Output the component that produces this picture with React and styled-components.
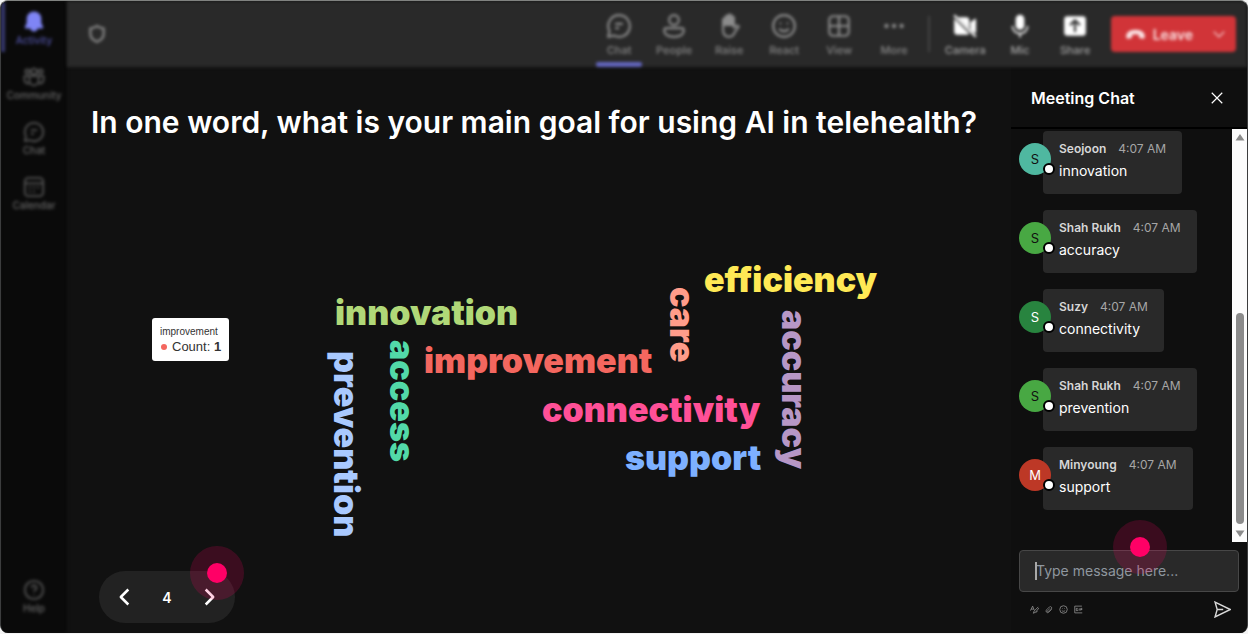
import React from 'react';
import styled, { createGlobalStyle } from 'styled-components';

const GlobalStyle = createGlobalStyle`
  * {
    box-sizing: border-box;
  }

  body {
    margin: 0;
    background: #f4f4f4;
    color: #fff;
    font-family: Inter, 'Liberation Sans', sans-serif;
  }

  button {
    padding: 0;
    border: 0;
    background: none;
    color: inherit;
    font-family: inherit;
    cursor: pointer;
  }

  svg {
    display: block;
    flex: none;
  }
`;

const Page = styled.div`
  height: 100vh;
  min-height: 600px;
  padding-bottom: 1px;
`;

const Frame = styled.div`
  display: grid;
  grid-template-columns: 66px 1fr;
  height: 100%;
  border: 1px solid #3c3d3e;
  border-top-color: #808280;
  border-bottom: 0;
  border-radius: 8px;
  background: #111;
  overflow: hidden;
`;

const Sidebar = styled.nav`
  display: flex;
  flex-direction: column;
  gap: 5px;
  padding: 1px 0 12px;
  background: #0a0a0a;
  filter: blur(1px) blur(1px);
`;

const NavItem = styled.button`
  display: flex;
  flex-direction: column;
  align-items: center;
  height: ${p => (p.$last ? '42px' : '50px')};
  margin-top: ${p => (p.$last ? 'auto' : '0')};
  padding-top: ${p => (p.$last ? '0' : '9px')};
  border-left: 4px solid ${p => (p.$active ? '#37396f' : 'transparent')};
  border-right: 4px solid transparent;
  color: ${p => (p.$active ? '#7f85f5' : '#545454')};
  font-size: 10px;
  line-height: 14px;

  span {
    color: ${p => (p.$active ? '#5052a4' : '#686868')};
    font-weight: 500;
  }
`;

const Main = styled.div`
  display: flex;
  flex-direction: column;
  min-width: 0;
  min-height: 0;
`;

const Toolbar = styled.header`
  display: flex;
  align-items: center;
  flex: none;
  height: 66px;
  padding: 0 11px 0 20px;
  background: #292929;
  color: #808080;
  filter: blur(1px) blur(1px);
`;

const Tools = styled.div`
  display: flex;
  align-items: center;
  height: 100%;
  margin-left: auto;
`;

const Tool = styled.button`
  display: flex;
  flex-direction: column;
  align-items: center;
  gap: 3px;
  width: 55px;
  height: 100%;
  padding-top: 12px;
  color: ${p => (p.$bright ? '#fff' : '#8c8c8c')};
  font-size: 11px;
  line-height: 16px;

  span {
    color: ${p => (p.$bright ? '#a2a2a2' : '#868686')};
    font-weight: 500;
  }

  &::after {
    content: '';
    width: 46px;
    height: 5px;
    margin-top: 1px;
    border-radius: 2px;
    background: ${p => (p.$active ? '#6366bd' : 'transparent')};
  }
`;

const Divider = styled.div`
  width: 2px;
  height: 36px;
  margin: 0 8px 0 6px;
  background: #444;
`;

const LeaveGroup = styled.div`
  display: flex;
  height: 36px;
  margin-left: 8px;
  border-radius: 4px;
  background: #d13438;
  color: #fbe3e4;
`;

const LeaveButton = styled.button`
  display: flex;
  align-items: center;
  gap: 7px;
  padding: 0 15px 0 14px;
  font-size: 14px;
  font-weight: 600;
`;

const LeaveMenu = styled.button`
  display: flex;
  align-items: center;
  padding: 0 10px 0 4px;
`;

const Content = styled.div`
  display: flex;
  flex: 1;
  min-height: 0;
`;

const Slide = styled.main`
  display: flex;
  flex-direction: column;
  flex: 1;
  min-width: 0;
  padding: 36px 24px 10px;
`;

const Question = styled.h1`
  margin: 0;
  font-size: 30px;
  font-weight: 600;
  line-height: 38px;
`;

const Cloud = styled.div`
  position: relative;
  flex: 1;
`;

/* Every word sits at its own spot on the cloud's canvas. */
const Word = styled.span`
  position: absolute;
  left: ${p => p.$x}px;
  top: ${p => p.$y}px;
  color: ${p => p.$color};
  font-size: 34px;
  font-weight: 900;
  line-height: 40px;
  white-space: nowrap;
  writing-mode: ${p => (p.$vertical ? 'vertical-rl' : 'horizontal-tb')};
`;

const Tooltip = styled.div`
  position: absolute;
  left: 61px;
  top: 177px;
  padding: 7px 8px;
  border-radius: 3px;
  background: #fff;
  color: #333;
  font-family: 'Liberation Sans', Arial, sans-serif;
  font-size: 13px;
  line-height: 15px;
  white-space: nowrap;
`;

const TooltipTitle = styled.div`
  font-size: 10px;
  line-height: 14px;
`;

const SeriesDot = styled.i`
  display: inline-block;
  width: 6px;
  height: 6px;
  margin: 0 5px 1px 1px;
  border-radius: 50%;
  background: #f4675f;
`;

const Pager = styled.div`
  position: relative;
  display: grid;
  grid-template-columns: repeat(3, 42px);
  align-self: flex-start;
  align-items: center;
  justify-items: center;
  height: 52px;
  margin-left: 8px;
  padding: 0 5px;
  border-radius: 26px;
  background: #222;
  font-size: 14px;
  font-weight: 600;
`;

const Hotspot = styled.div`
  position: absolute;
  right: ${p => p.$right}px;
  top: ${p => p.$top}px;
  display: grid;
  place-items: center;
  width: 54px;
  height: 54px;
  border-radius: 50%;
  background: rgba(255, 0, 102, 0.18);
  pointer-events: none;

  &::after {
    content: '';
    width: 20px;
    height: 20px;
    border-radius: 50%;
    background: #ff0066;
  }
`;

const ChatPanel = styled.aside`
  display: flex;
  flex-direction: column;
  flex: none;
  width: 236px;
  padding-top: 2px;
  background: #0f0f0f;
`;

const ChatHeader = styled.div`
  display: flex;
  align-items: center;
  justify-content: space-between;
  flex: none;
  height: 60px;
  padding: 0 23px 0 20px;
  border-bottom: 2px solid #000;
`;

const ChatTitle = styled.h2`
  margin: 0;
  font-size: 16px;
  font-weight: 600;
`;

const ChatBody = styled.div`
  display: flex;
  flex: 1;
  min-height: 0;
`;

const Messages = styled.ul`
  display: flex;
  flex-direction: column;
  flex: 1;
  gap: 16px;
  margin: 0;
  padding: 2px 8px 0;
  list-style: none;
  overflow: hidden;
`;

const MessageRow = styled.li`
  display: flex;
  align-items: flex-start;
`;

const Avatar = styled.div`
  position: relative;
  display: grid;
  place-items: center;
  flex: none;
  width: 32px;
  height: 32px;
  margin: 12px -8px 0 0;
  border-radius: 50%;
  background: ${p => p.$color};
  color: ${p => p.$ink};
  font-size: 13px;
`;

/* Sits on the avatar's lower right edge, over the bubble. */
const Presence = styled.i`
  position: absolute;
  left: 24px;
  top: 20px;
  width: 12px;
  height: 12px;
  border: 2px solid #000;
  border-radius: 50%;
  background: #fff;
`;

const Bubble = styled.div`
  height: 63px;
  padding: 9px 16px;
  border-radius: 4px;
  background: #292929;
`;

const MessageMeta = styled.div`
  display: flex;
  gap: 12px;
  color: #a6a6a6;
  font-size: 12px;
  line-height: 18px;

  strong {
    color: #d6d6d6;
    font-weight: 600;
  }
`;

const MessageText = styled.p`
  margin: 3px 0 0;
  font-size: 14px;
  line-height: 20px;
`;

const Scrollbar = styled.div`
  display: flex;
  flex-direction: column;
  align-items: center;
  flex: none;
  width: 15px;
  padding: 4px 0;
  background: #fcfcfc;
  color: #8b8b8b;
`;

const Track = styled.div`
  display: flex;
  flex: 1;
  align-items: flex-end;
  padding: 6px 0;
`;

const Thumb = styled.div`
  width: 8px;
  height: 56%;
  border-radius: 4px;
  background: #8b8b8b;
`;

const Composer = styled.form`
  position: relative;
  flex: none;
  padding: 8px 8px 15px;
`;

const MessageInput = styled.input`
  display: block;
  width: 100%;
  height: 42px;
  padding: 0 16px 2px;
  border: 1px solid #474747;
  border-radius: 4px;
  outline: none;
  background: #292929;
  color: #fff;
  font-family: inherit;
  font-size: 14px;

  &::placeholder {
    color: #8f979f;
    opacity: 1;
  }
`;

const Caret = styled.i`
  position: absolute;
  left: 24px;
  top: 20px;
  width: 2px;
  height: 18px;
  background: #a8a8a8;
`;

const ComposerTools = styled.div`
  display: flex;
  align-items: center;
  gap: 6px;
  margin-top: 9px;
  padding: 0 8px 0 11px;
  color: #999;

  button:last-child {
    margin-left: auto;
    color: #d6d6d6;
  }
`;

const ICONS = {
  bell: (
    <path
      fill="currentColor"
      stroke="none"
      d="M12 .5a8 8 0 0 0-8 8v4.7L2 17.5c-.3.8.2 1.5 1 1.5h4.9a4.2 4.2 0 0 0 8.2 0H21c.8 0 1.3-.7 1-1.5l-2-4.3V8.5a8 8 0 0 0-8-8z"
    />
  ),
  community: (
    <>
      <circle cx="12" cy="6" r="3.2" />
      <circle cx="4.8" cy="6" r="2.3" />
      <circle cx="19.2" cy="6" r="2.3" />
      <path d="M7 11h10v5a5 5 0 0 1-10 0zM7 11H1.5v4a4 4 0 0 0 5.8 3.6M17 11h5.5v4a4 4 0 0 1-5.8 3.6" />
    </>
  ),
  chat: <path d="M12 2a10 10 0 1 1-4.7 18.8L2 22l1.2-5.3A10 10 0 0 1 12 2zM8.5 10h7M8.5 14H12" />,
  calendar: (
    <>
      <rect x="2" y="2" width="20" height="20" rx="4" />
      <path d="M2 8h20M6.5 12.5h2M11 12.5h2M15.5 12.5h2M6.5 17h2M11 17h2" />
    </>
  ),
  help: (
    <>
      <circle cx="12" cy="12" r="10" />
      <path d="M9.5 9.5a2.6 2.6 0 1 1 3.8 2.3c-1 .6-1.3 1-1.3 2M12 17v1" />
    </>
  ),
  shield: <path d="M12 2.5c2.4 1.8 5 2.6 8 2.8v6.2c0 4.8-2.8 8-8 10-5.2-2-8-5.2-8-10V5.3c3-.2 5.6-1 8-2.8z" />,
  people: (
    <>
      <circle cx="12" cy="6.5" r="4.5" />
      <path d="M5 14h14a2 2 0 0 1 2 2c0 4-4 6-9 6s-9-2-9-6a2 2 0 0 1 2-2z" />
    </>
  ),
  hand: (
    <>
      <path
        fill="currentColor"
        d="M6.5 11V6.3a1.2 1.2 0 0 1 2.4 0V4a1.3 1.3 0 0 1 2.6 0V2.8a1.3 1.3 0 0 1 2.6 0V4.5a1.2 1.2 0 0 1 2.4 0V11z"
      />
      <path d="M6.5 10v5.5c0 4 2 6.5 5.5 6.5 3 0 4.5-1.8 5.5-4.5l3.5-5c-1.3-1.4-3-1-4.5 1V9" />
    </>
  ),
  smile: (
    <>
      <circle cx="12" cy="12" r="10" />
      <path d="M8 9.5h1.5M14.5 9.5H16M7.5 14.5c2.4 3 6.6 3 9 0" />
    </>
  ),
  grid: (
    <>
      <rect x="3" y="3" width="18" height="18" rx="3.5" />
      <path d="M12 3v18M3 12h18" />
    </>
  ),
  more: <path strokeWidth="4" strokeLinecap="round" d="M5 12h.1M12 12h.1M19 12h.1" />,
  camera: (
    <>
      <path
        fill="currentColor"
        stroke="none"
        d="M5.5 4H13a3 3 0 0 1 3 3v7.5zM2 5l14 14.2c-.6.5-1.5.8-2.5.8H5a3 3 0 0 1-3-3zM17 8.5l4-3c.6-.4 1.2 0 1.2.6v11.8c0 .7-.6 1-1.2.6l-4-3z"
      />
      <path d="M2 2l20 20" />
    </>
  ),
  mic: (
    <>
      <rect x="8" y="1.5" width="8" height="14" rx="4" fill="currentColor" stroke="none" />
      <path strokeWidth="1.5" d="M5 12a7 7 0 0 0 14 0M12 19v3.5" />
    </>
  ),
  share: (
    <>
      <rect x="2" y="3" width="20" height="18" rx="3" fill="currentColor" stroke="none" />
      <path stroke="#333" d="M12 17.5V7M7.5 11.2L12 6.8l4.5 4.4" />
    </>
  ),
  phone: (
    <path
      fill="currentColor"
      stroke="none"
      d="M12 6.5c5 0 8.5 1.8 10 4.5.8 1.5.8 3.5.3 5-.2.7-.9 1-1.6.9l-3.5-.7c-.7-.2-1.1-.7-1.2-1.4l-.3-2.6c-2.4-.8-5-.8-7.4 0L8 14.8c-.1.7-.5 1.2-1.2 1.4l-3.5.7c-.7.1-1.4-.2-1.6-.9-.5-1.5-.5-3.5.3-5 1.5-2.7 5-4.5 10-4.5z"
    />
  ),
  down: <path d="M3 8l9 9 9-9" />,
  left: <path d="M16 3l-9 9 9 9" />,
  right: <path d="M8 3l9 9-9 9" />,
  close: <path d="M3 3l18 18M21 3L3 21" />,
  format: <path d="M1 15L7 3l4 10M3 11h7M22 5L11 16l-2 6 6-3L24 8M15 20c2-2 3-1 5-3" />,
  clip: <path d="M20 10l-9 9a5 5 0 0 1-7-7l9-9a4 4 0 0 1 6 6l-9 9a2 2 0 0 1-3-3l8-8" />,
  gif: (
    <>
      <path d="M21 3H2v18h20" />
      <path d="M10 9H6v6h4v-3M14 9v6M22 9h-4v6M18 12h4" />
    </>
  ),
  send: <path strokeLinejoin="miter" d="M1.5 1.5L23 12 1.5 22.5 4.5 12zM4.5 12H13" />
};

const Icon = ({ name, size = 20, stroke = 2 }) => (
  <svg
    width={size}
    height={size}
    viewBox="0 0 24 24"
    fill="none"
    stroke="currentColor"
    strokeWidth={stroke}
    strokeLinejoin="round"
    aria-hidden="true"
  >
    {ICONS[name]}
  </svg>
);

const navItems = [
  { icon: 'bell', label: 'Activity', active: true },
  { icon: 'community', label: 'Community' },
  { icon: 'chat', label: 'Chat' },
  { icon: 'calendar', label: 'Calendar' }
];

const meetingTools = [
  { icon: 'chat', label: 'Chat', active: true },
  { icon: 'people', label: 'People' },
  { icon: 'hand', label: 'Raise' },
  { icon: 'smile', label: 'React' },
  { icon: 'grid', label: 'View' },
  { icon: 'more', label: 'More' }
];

const deviceTools = [
  { icon: 'camera', label: 'Camera' },
  { icon: 'mic', label: 'Mic' },
  { icon: 'share', label: 'Share' }
];

const words = [
  { text: 'innovation', x: 244, y: 152, color: '#b0d878' },
  { text: 'efficiency', x: 613, y: 119, color: '#ffe955' },
  { text: 'improvement', x: 333, y: 200, color: '#f4675f' },
  { text: 'connectivity', x: 451, y: 249, color: '#ff5097' },
  { text: 'support', x: 534, y: 297, color: '#7db0ff' },
  { text: 'prevention', x: 235, y: 210, color: '#a9c9ff', vertical: true },
  { text: 'access', x: 291, y: 199, color: '#52d9a8', vertical: true },
  { text: 'care', x: 571, y: 146, color: '#ff9c8a', vertical: true },
  { text: 'accuracy', x: 683, y: 169, color: '#b797c6', vertical: true }
];

const messages = [
  { name: 'Seojoon', text: 'innovation', color: '#4fb8a0', ink: '#111' },
  { name: 'Shah Rukh', text: 'accuracy', color: '#48a843', ink: '#111' },
  { name: 'Suzy', text: 'connectivity', color: '#28843f', ink: '#fff' },
  { name: 'Shah Rukh', text: 'prevention', color: '#48a843', ink: '#111' },
  { name: 'Minyoung', text: 'support', color: '#bd3826', ink: '#fff' }
];

const renderTool = (tool, bright) => (
  <Tool key={tool.label} type="button" $active={tool.active} $bright={bright}>
    <Icon name={tool.icon} size={26} />
    <span>{tool.label}</span>
  </Tool>
);

class Chat extends React.Component {
  constructor(props) {
    super(props);
    this.state = { draft: '' };
    this.onDraftChange = this.onDraftChange.bind(this);
    this.onSubmit = this.onSubmit.bind(this);
  }

  onDraftChange(e) {
    this.setState({ draft: e.target.value });
  }

  onSubmit(e) {
    e.preventDefault();
    this.setState({ draft: '' });
  }

  render() {
    return (
      <ChatPanel>
        <ChatHeader>
          <ChatTitle>Meeting Chat</ChatTitle>
          <button type="button" aria-label="Close chat">
            <Icon name="close" size={14} />
          </button>
        </ChatHeader>
        <ChatBody>
          <Messages>
            {messages.map((m, i) => (
              <MessageRow key={i}>
                <Avatar $color={m.color} $ink={m.ink}>
                  {m.name[0]}
                  <Presence />
                </Avatar>
                <Bubble>
                  <MessageMeta>
                    <strong>{m.name}</strong>
                    <span>4:07 AM</span>
                  </MessageMeta>
                  <MessageText>{m.text}</MessageText>
                </Bubble>
              </MessageRow>
            ))}
          </Messages>
          <Scrollbar aria-hidden="true">
            <svg width="10" height="8" viewBox="0 0 10 8">
              <path fill="currentColor" d="M5 1l4.5 6.5h-9z" />
            </svg>
            <Track>
              <Thumb />
            </Track>
            <svg width="10" height="8" viewBox="0 0 10 8">
              <path fill="currentColor" d="M5 7L.5.5h9z" />
            </svg>
          </Scrollbar>
        </ChatBody>
        <Composer onSubmit={this.onSubmit}>
          <MessageInput
            aria-label="Message"
            placeholder="Type message here..."
            value={this.state.draft}
            onChange={this.onDraftChange}
          />
          {this.state.draft === '' && <Caret />}
          <Hotspot $right={80} $top={-22} />
          <ComposerTools>
            <button type="button" aria-label="Format">
              <Icon name="format" size={9} />
            </button>
            <button type="button" aria-label="Attach">
              <Icon name="clip" size={8} />
            </button>
            <button type="button" aria-label="Emoji">
              <Icon name="smile" size={9} />
            </button>
            <button type="button" aria-label="GIF">
              <Icon name="gif" size={9} />
            </button>
            <button type="submit" aria-label="Send">
              <Icon name="send" size={17} />
            </button>
          </ComposerTools>
        </Composer>
      </ChatPanel>
    );
  }
}

const App = () => (
  <Page>
    <GlobalStyle />
    <Frame>
      <Sidebar>
        {navItems.map(item => (
          <NavItem key={item.label} type="button" $active={item.active}>
            <Icon name={item.icon} size={22} />
            <span>{item.label}</span>
          </NavItem>
        ))}
        <NavItem type="button" $last>
          <Icon name="help" size={22} />
          <span>Help</span>
        </NavItem>
      </Sidebar>
      <Main>
        <Toolbar>
          <Icon name="shield" size={20} stroke={3} />
          <Tools>
            {meetingTools.map(tool => renderTool(tool, false))}
            <Divider />
            {deviceTools.map(tool => renderTool(tool, true))}
            <LeaveGroup>
              <LeaveButton type="button">
                <Icon name="phone" size={21} />
                Leave
              </LeaveButton>
              <LeaveMenu type="button" aria-label="Leave options">
                <Icon name="down" size={14} />
              </LeaveMenu>
            </LeaveGroup>
          </Tools>
        </Toolbar>
        <Content>
          <Slide>
            <Question>In one word, what is your main goal for using AI in telehealth?</Question>
            <Cloud>
              {words.map(w => (
                <Word key={w.text} $x={w.x} $y={w.y} $color={w.color} $vertical={w.vertical}>
                  {w.text}
                </Word>
              ))}
              <Tooltip>
                <TooltipTitle>improvement</TooltipTitle>
                <SeriesDot />
                Count: <b>1</b>
              </Tooltip>
            </Cloud>
            <Pager>
              <button type="button" aria-label="Previous slide">
                <Icon name="left" size={20} stroke={3} />
              </button>
              <span>4</span>
              <button type="button" aria-label="Next slide">
                <Icon name="right" size={20} stroke={3} />
              </button>
              <Hotspot $right={-9} $top={-25} />
            </Pager>
          </Slide>
          <Chat />
        </Content>
      </Main>
    </Frame>
  </Page>
);

export default App;
